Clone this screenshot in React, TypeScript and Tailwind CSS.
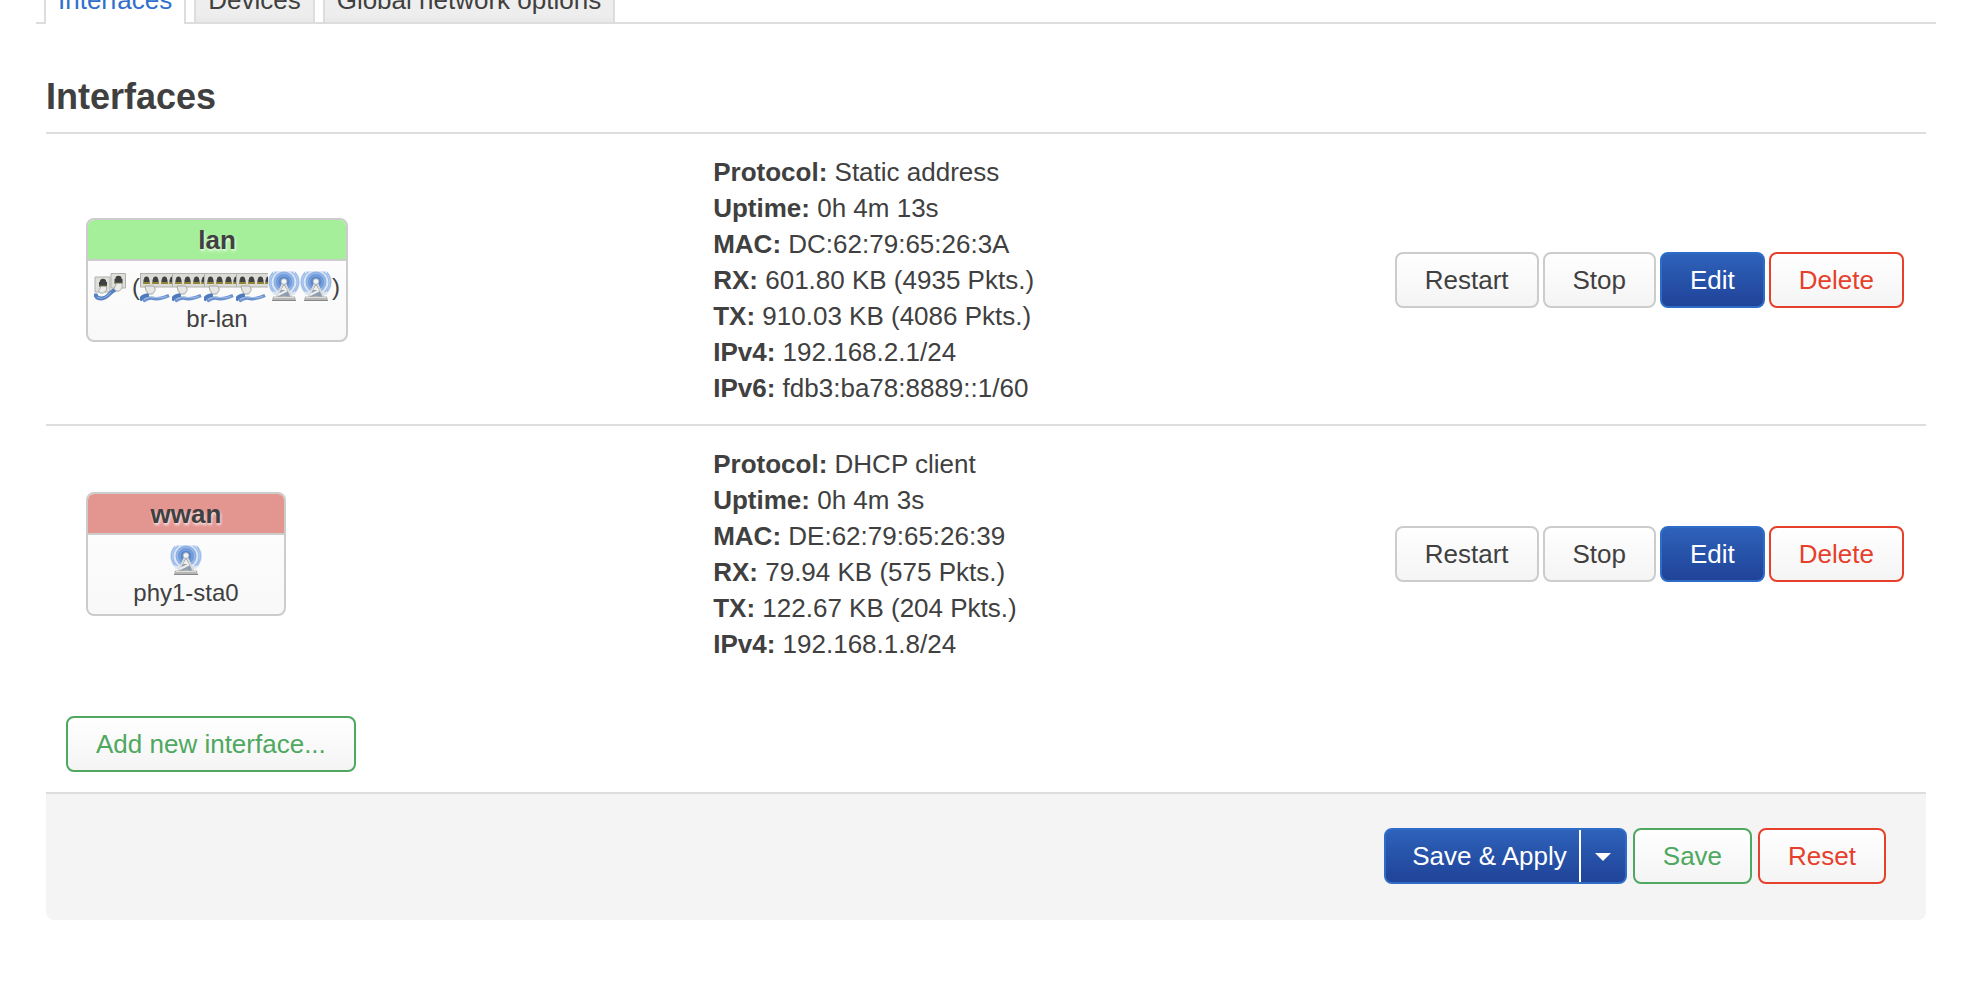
import { clsx } from 'clsx';
import type { ReactNode } from 'react';

type Variant = 'neutral' | 'action' | 'positive' | 'negative';

type Interface = {
  name: string;
  device: string;
  up: boolean;
  bridge?: boolean;
  details: [string, string][];
};

const tabs = ['Interfaces', 'Devices', 'Global network options'];

const interfaces: Interface[] = [
  {
    name: 'lan',
    device: 'br-lan',
    up: true,
    bridge: true,
    details: [
      ['Protocol', 'Static address'],
      ['Uptime', '0h 4m 13s'],
      ['MAC', 'DC:62:79:65:26:3A'],
      ['RX', '601.80 KB (4935 Pkts.)'],
      ['TX', '910.03 KB (4086 Pkts.)'],
      ['IPv4', '192.168.2.1/24'],
      ['IPv6', 'fdb3:ba78:8889::1/60'],
    ],
  },
  {
    name: 'wwan',
    device: 'phy1-sta0',
    up: false,
    details: [
      ['Protocol', 'DHCP client'],
      ['Uptime', '0h 4m 3s'],
      ['MAC', 'DE:62:79:65:26:39'],
      ['RX', '79.94 KB (575 Pkts.)'],
      ['TX', '122.67 KB (204 Pkts.)'],
      ['IPv4', '192.168.1.8/24'],
    ],
  },
];

const variants: Record<Variant, string> = {
  neutral: 'border-[#cccccc] text-[#404040] from-white to-[#f4f4f4]',
  action: 'border-[#2f6cc8] text-white from-[#2f63bb] to-[#1f4297]',
  positive: 'border-[#4ea85f] text-[#4ea85f] from-white to-[#f4f4f4]',
  negative: 'border-[#e5402b] text-[#e5402b] from-white to-[#f4f4f4]',
};

function Button({ variant = 'neutral', children }: { variant?: Variant; children: ReactNode }) {
  return (
    <button
      type="button"
      className={clsx(
        'h-14 rounded-lg border-2 bg-linear-to-b bg-origin-border px-7 whitespace-nowrap',
        variants[variant],
      )}
    >
      {children}
    </button>
  );
}

function WifiIcon() {
  return (
    <svg width="32" height="32" viewBox="0 0 32 32" aria-hidden="true">
      <path d="M6 0h20q6 4 6 11t-6 13H6Q0 18 0 11T6 0z" fill="#d3e1f5" opacity=".8" />
      <g fill="none" stroke="#9dbce8" strokeWidth="1.4">
        <path d="M5 1.500a14.500 14.500 0 0 0 0 19M27 1.500a14.500 14.500 0 0 1 0 19" />
        <path d="M8.500 1a12.500 12.500 0 0 0-1 20M23.500 1a12.500 12.500 0 0 1 1 20" />
      </g>
      <circle cx="16" cy="11" r="10.500" fill="#8fb2e5" />
      <circle cx="16" cy="11" r="8.500" fill="#6f99d8" stroke="#9fbeea" strokeWidth=".8" />
      <circle cx="16" cy="11" r="6" fill="#5a88cd" stroke="#85a8de" strokeWidth=".8" />
      <path d="m14.500 12-6.500 14h16l-6.500-14z" fill="#8e9cb0" />
      <path d="M14.500 13 8.500 26M17.500 13l6 13" stroke="#d9dad8" strokeWidth="1.8" />
      <path d="m16 14-3 5h6z" fill="#eeeeec" />
      <path d="m10 24 9-4.500" stroke="#eeeeec" strokeWidth="2" />
      <path d="M5 25.500h8l3-1 3 1h8l1 4H4z" fill="#b5b6b4" />
      <path d="M6 26.500h20" stroke="#dededb" />
      <path d="M4 29.500h24" stroke="#85878a" />
      <circle cx="16" cy="10.500" r="2.800" fill="#f4f4f1" stroke="#b3b8bd" strokeWidth=".8" />
    </svg>
  );
}

function PortIcon() {
  return (
    <svg width="32" height="32" viewBox="0 0 32 32" aria-hidden="true">
      <path d="M0 2h32v14H0z" fill="#dcdcd7" />
      <path d="M0 2.500h32M0 16h32M.5 3v13" fill="none" stroke="#b0b1ac" />
      {[4, 13, 22, 30].map((x) => (
        <g key={x} fill="#3f4042">
          <circle cx={x + 2.5} cy="8" r="2.500" />
          <path d={`M${x - 0.5} 8.500h6V13h-6z`} />
          <path d={`M${x - 0.5} 11h6v2h-6z`} fill="#95852f" />
        </g>
      ))}
      <path d="M0 29.500q2-5 9-5.500" fill="none" stroke="#4f7bbd" strokeWidth="4" />
      <path d="M3 30q6-4 11-2.500 6 1 15-3" fill="none" stroke="#6a92cf" strokeWidth="3.400" />
      <path d="M4 28.500q6-4 11-2 6 1 12-1" fill="none" stroke="#a3bfe6" />
      <path d="M5 15h8l2 1.500v3L12.500 23H8.500L6 19.500z" fill="#e6e7e4" stroke="#a4a6a3" />
    </svg>
  );
}

function BridgeIcon() {
  return (
    <svg width="32" height="32" viewBox="0 0 32 32" aria-hidden="true">
      <path d="M1 6h15v15H1z" fill="#dfdfda" stroke="#b0b1ac" />
      <path d="M17 2.500h14.500V17H17z" fill="#dfdfda" stroke="#b0b1ac" />
      <circle cx="9" cy="11" r="3.200" fill="#3f4042" />
      <path d="M5 11h8v4.500H5z" fill="#3f4042" />
      <circle cx="24.500" cy="8" r="3.200" fill="#3f4042" />
      <path d="M20.500 8h8v4.500h-8z" fill="#3f4042" />
      <path d="M5 15h8M20.500 12h8" stroke="#85773a" />
      <path d="M1.500 22.500q0 5 6 5c7 0 8-7.500 15-9.500" fill="none" stroke="#5480c2" strokeWidth="4" />
      <path d="M3 26c5 3 10 0 14-5" fill="none" stroke="#8fb0e0" strokeWidth="1.2" />
      <path d="M7 15.500h5.500v3.500L9.500 22H6l-1.500-2z" fill="#ebebe9" stroke="#adafac" />
      <path d="M22.500 12.500H28V17l-2.500 3h-3.500l-2-2.500z" fill="#ebebe9" stroke="#adafac" />
    </svg>
  );
}

function InterfaceBadge({ iface }: { iface: Interface }) {
  return (
    <div className="w-fit min-w-50 overflow-hidden rounded-lg border-2 border-[#cccccc] bg-linear-to-b from-white to-[#f8f8f8] text-center">
      <div
        className={clsx(
          'border-b-2 border-[#cccccc] pt-0.5 pb-px font-bold [text-shadow:1px_2px_3px_#ffffffcc]',
          iface.up ? 'bg-[#a6ef9a]' : 'bg-[#e39590]',
        )}
      >
        {iface.name}
      </div>
      <div className="px-1.5 pt-2.5 pb-[5px] text-[24px] leading-8">
        <div className="flex items-center justify-center">
          {iface.bridge ? (
            <>
              <BridgeIcon />
              <span className="ml-1.5">(</span>
              <PortIcon />
              <PortIcon />
              <PortIcon />
              <PortIcon />
              <WifiIcon />
              <WifiIcon />
              <span>)</span>
            </>
          ) : (
            <WifiIcon />
          )}
        </div>
        <div>{iface.device}</div>
      </div>
    </div>
  );
}

function InterfaceRow({ iface }: { iface: Interface }) {
  return (
    <tr className="border-t-2 border-[#dddddd]">
      <td className="w-[34%] pt-5 pb-4.5 pl-10">
        <InterfaceBadge iface={iface} />
      </td>
      <td className="pt-5 pb-4.5 pl-7">
        {iface.details.map(([label, value]) => (
          <div key={label}>
            <strong>{label}:</strong> {value}
          </div>
        ))}
      </td>
      <td className="pt-5 pr-5.5 pb-4.5">
        <div className="flex justify-end gap-1">
          <Button>Restart</Button>
          <Button>Stop</Button>
          <Button variant="action">Edit</Button>
          <Button variant="negative">Delete</Button>
        </div>
      </td>
    </tr>
  );
}

export default function App() {
  return (
    <div className="min-h-screen bg-white font-['Helvetica_Neue','Liberation_Sans',Arial,sans-serif] text-[26px] leading-9 text-[#404040]">
      <nav className="mr-8 ml-9 flex h-6 items-end gap-2 overflow-hidden bg-[linear-gradient(#dddddd,#dddddd)] bg-[length:100%_2px] bg-bottom bg-no-repeat pl-2">
        {tabs.map((tab, i) => (
          <a
            key={tab}
            href="#"
            className={clsx(
              'shrink-0 border-x-2 border-[#dddddd] px-3 whitespace-nowrap',
              i === 0
                ? 'bg-white pb-1.5 text-[#3070cc]'
                : 'border-b-2 bg-linear-to-t from-[#e8e8e8] to-[#eeeeee] to-20% pb-1',
            )}
          >
            {tab}
          </a>
        ))}
      </nav>

      <main className="mr-10.5 ml-11.5">
        <h3 className="pt-[49px] pb-[11px] text-[36px] leading-12 font-bold">Interfaces</h3>

        <table className="w-full border-collapse">
          <tbody>
            {interfaces.map((iface) => (
              <InterfaceRow key={iface.name} iface={iface} />
            ))}
          </tbody>
        </table>

        <div className="flex px-5 pt-9 pb-5">
          <Button variant="positive">Add new interface...</Button>
        </div>

        <footer className="flex justify-end gap-1.5 rounded-b-lg border-t-2 border-[#dddddd] bg-[#f4f4f4] px-10 pt-8.5 pb-9">
          <div className="flex h-14 rounded-lg border-2 border-[#2f6cc8] bg-linear-to-b from-[#2f63bb] to-[#1f4297] bg-origin-border text-white">
            <button type="button" className="border-r-2 border-white pr-3 pl-6.5">
              Save &amp; Apply
            </button>
            <button type="button" aria-label="More apply options" className="flex w-11 items-center justify-center">
              <svg width="16" height="12" viewBox="0 0 16 12" aria-hidden="true">
                <path d="M0 3h16L8 11z" fill="currentColor" />
              </svg>
            </button>
          </div>
          <Button variant="positive">Save</Button>
          <Button variant="negative">Reset</Button>
        </footer>
      </main>
    </div>
  );
}
